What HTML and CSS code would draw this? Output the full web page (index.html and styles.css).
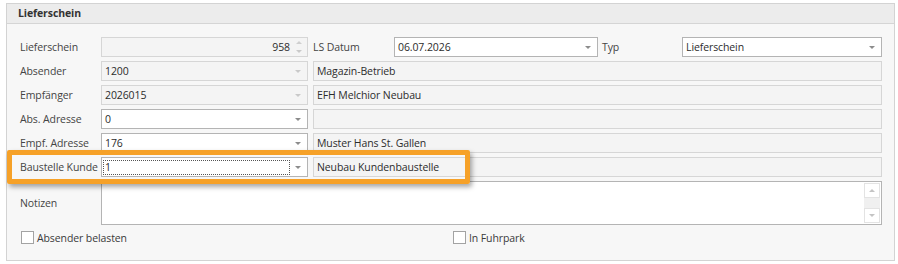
FILE: index.html
```html
<!DOCTYPE html>
<html lang="de">
<head>
    <meta charset="UTF-8">
    <meta name="viewport" content="width=device-width, initial-scale=1.0">
    <title>Lieferschein</title>
    <link rel="stylesheet" href="styles.css">
</head>
<body>
    <div class="panel">
        <div class="panel-head">Lieferschein</div>
        <div class="panel-body">
            <div class="row">
                <span class="lbl">Lieferschein</span>
                <div class="field ro w-left spin">
                    <span class="val num">958</span>
                    <span class="spin-btns">
                        <span class="tri tri-up light"></span>
                        <span class="tri light"></span>
                    </span>
                </div>
                <span class="lbl lbl-mid">LS Datum</span>
                <div class="field w-date combo">
                    <span class="val">06.07.2026</span>
                    <span class="tri"></span>
                </div>
                <span class="lbl lbl-typ">Typ</span>
                <div class="field w-typ combo">
                    <span class="val">Lieferschein</span>
                    <span class="tri"></span>
                </div>
            </div>

            <div class="row">
                <span class="lbl">Absender</span>
                <div class="field ro w-left combo">
                    <span class="val">1200</span>
                    <span class="tri light"></span>
                </div>
                <div class="field ro w-wide"><span class="val">Magazin-Betrieb</span></div>
            </div>

            <div class="row">
                <span class="lbl">Empfänger</span>
                <div class="field ro w-left combo">
                    <span class="val">2026015</span>
                    <span class="tri light"></span>
                </div>
                <div class="field ro w-wide"><span class="val">EFH Melchior Neubau</span></div>
            </div>

            <div class="row">
                <span class="lbl">Abs. Adresse</span>
                <div class="field w-left combo">
                    <span class="val">0</span>
                    <span class="tri"></span>
                </div>
                <div class="field ro w-wide"><span class="val"></span></div>
            </div>

            <div class="row">
                <span class="lbl">Empf. Adresse</span>
                <div class="field w-left combo">
                    <span class="val">176</span>
                    <span class="tri"></span>
                </div>
                <div class="field ro w-wide"><span class="val">Muster Hans St. Gallen</span></div>
            </div>

            <div class="row">
                <span class="lbl">Baustelle Kunde</span>
                <div class="field w-left combo focus">
                    <span class="val">1</span>
                    <span class="tri"></span>
                </div>
                <div class="field ro w-wide"><span class="val">Neubau Kundenbaustelle</span></div>
            </div>

            <div class="row row-notes">
                <span class="lbl">Notizen</span>
                <div class="field notes">
                    <div class="scroll">
                        <span class="sbtn"><span class="tri tri-up faint"></span></span>
                        <span class="sbtn"><span class="tri faint"></span></span>
                    </div>
                </div>
            </div>

            <div class="checks">
                <label class="check check-left"><span class="box"></span>Absender belasten</label>
                <label class="check"><span class="box"></span>In Fuhrpark</label>
            </div>
        </div>
        <div class="highlight"></div>
    </div>
</body>
</html>
```

FILE: styles.css
```css
body {
    margin: 0;
    background: #ffffff;
    font-family: 'Open Sans', 'Noto Sans', sans-serif;
    font-size: 10.5px;
    letter-spacing: -0.1px;
    color: #3a3a3a;
}

.panel {
    position: relative;
    width: 887px;
    margin: 3px 0 0 6px;
    border: 1px solid #d3d3d3;
    background: #f7f7f7;
}

.panel-head {
    height: 19px;
    line-height: 18px;
    padding-left: 11px;
    background: #ececec;
    border-bottom: 1px solid #d5d5d5;
    font-weight: bold;
    color: #333333;
}

.panel-body {
    padding: 13px 12px 16px 13px;
}

.row {
    display: flex;
    align-items: center;
    height: 20px;
    margin-bottom: 4px;
}

.lbl {
    width: 81px;
    flex: none;
    color: #444444;
    white-space: nowrap;
}

.lbl-mid {
    width: 81px;
    margin-left: 5px;
}

.lbl-typ {
    width: 80px;
    margin-left: 4px;
}

.field {
    box-sizing: border-box;
    height: 20px;
    display: flex;
    align-items: center;
    border: 1px solid #b4b4b4;
    background: #ffffff;
    color: #2c2c2c;
    flex: none;
}

.field.ro {
    border-color: #d6d6d6;
    background: #f4f4f4;
}

.w-left { width: 207px; }
.w-date { width: 204px; }
.w-typ { width: 200px; }

.w-wide {
    width: 569px;
    margin-left: 5px;
}

.val {
    flex: 1;
    padding-left: 3px;
    white-space: nowrap;
}

.val.num {
    text-align: right;
    padding-right: 6px;
}

.combo .tri {
    margin-right: 6px;
}

.focus .val {
    margin: 2px 16px 2px 2px;
    padding: 0 0 0 1px;
    line-height: 13px;
    outline: 1px dotted #555555;
}

.focus .tri {
    margin-left: -10px;
}

.tri {
    width: 0;
    height: 0;
    border-left: 3px solid transparent;
    border-right: 3px solid transparent;
    border-top: 3px solid #8c8c8c;
}

.tri.light { border-top-color: #c9c9c9; }
.tri.faint { border-top-color: #c4c4c4; }

.tri-up {
    border-top: none;
    border-bottom: 3px solid #8c8c8c;
}

.tri-up.light { border-bottom-color: #cfcfcf; }
.tri-up.faint { border-bottom-color: #c4c4c4; }

.spin-btns {
    display: flex;
    flex-direction: column;
    justify-content: space-between;
    height: 12px;
    margin-right: 5px;
}

.row-notes {
    height: 44px;
    margin-bottom: 6px;
}

.notes {
    width: 781px;
    height: 44px;
    justify-content: flex-end;
    align-items: stretch;
}

.scroll {
    width: 16px;
    margin: 1px 1px 1px 0;
    background: #f0f0f0;
    display: flex;
    flex-direction: column;
    justify-content: space-between;
}

.sbtn {
    box-sizing: border-box;
    height: 15px;
    background: #ffffff;
    border: 1px solid #e3e3e3;
    display: flex;
    align-items: center;
    justify-content: center;
}

.checks {
    display: flex;
    align-items: center;
    height: 13px;
    padding-left: 1px;
}

.check {
    display: flex;
    align-items: center;
    color: #3a3a3a;
}

.check-left {
    width: 432px;
}

.box {
    box-sizing: border-box;
    width: 13px;
    height: 13px;
    border: 1px solid #a3a3a3;
    background: #ffffff;
    margin-right: 3px;
}

.highlight {
    position: absolute;
    left: 0;
    top: 146px;
    box-sizing: border-box;
    width: 463px;
    height: 34px;
    border: 5px solid #f6a128;
    border-radius: 2px;
    box-shadow: 2px 3px 5px rgba(0, 0, 0, 0.35);
}
```
